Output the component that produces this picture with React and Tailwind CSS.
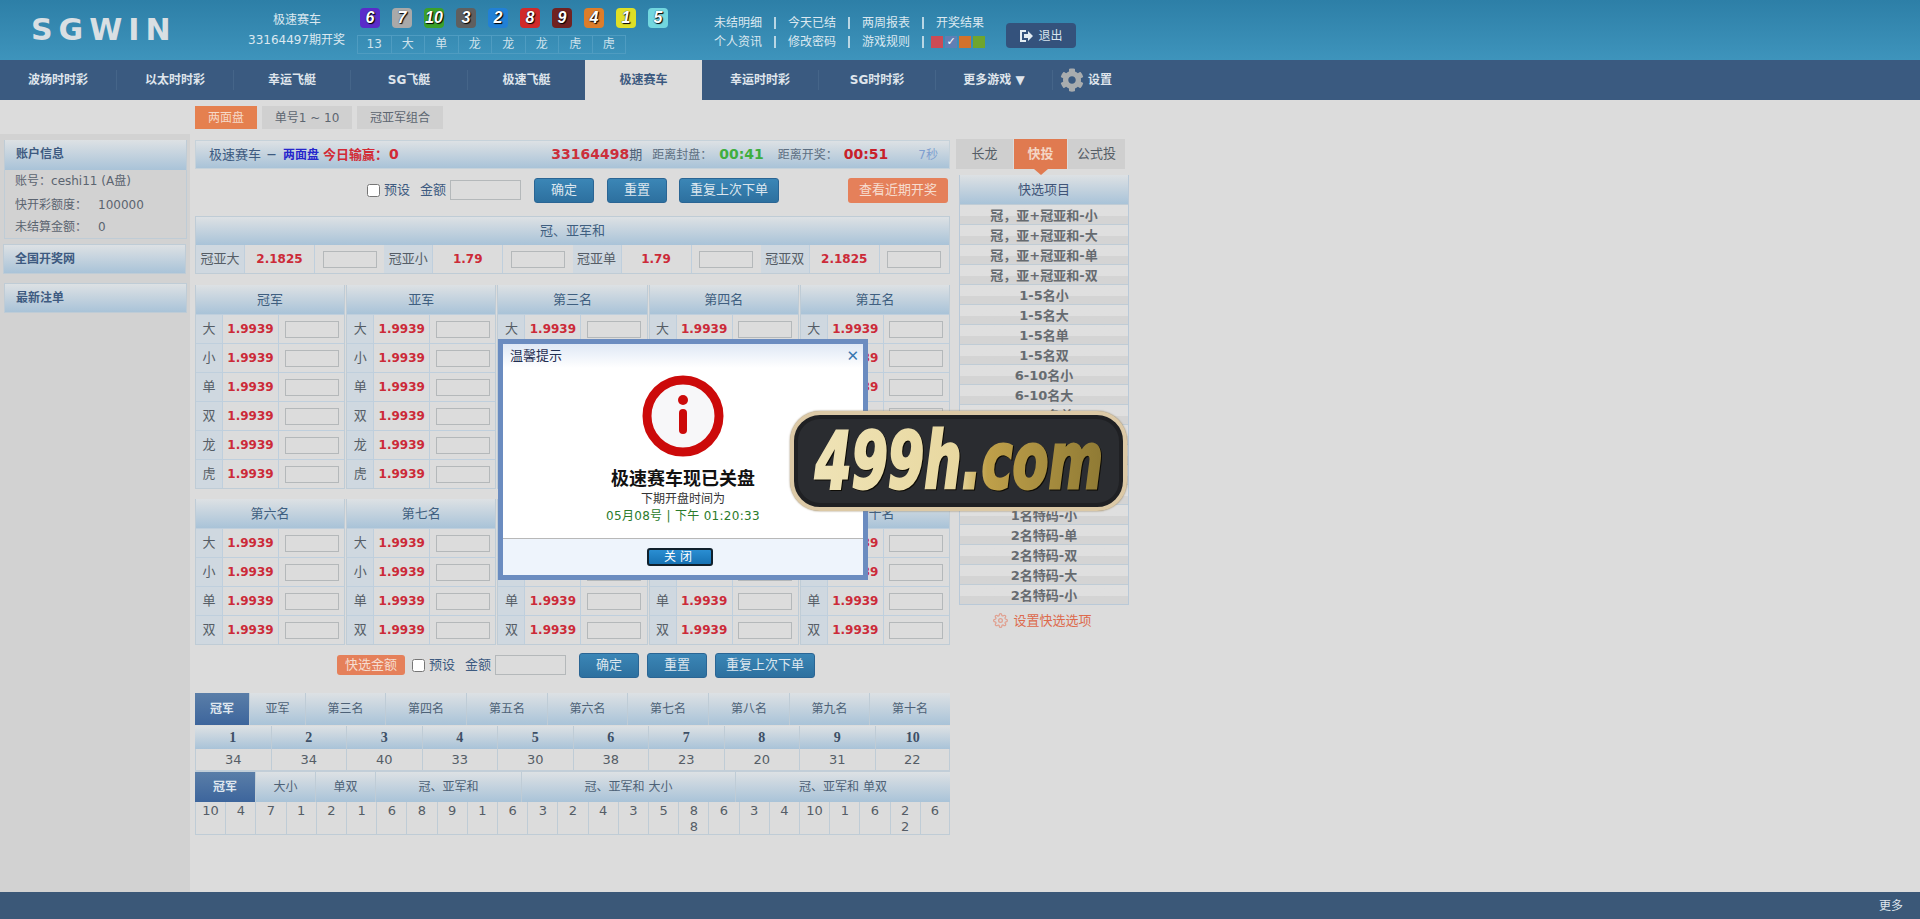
import React from "react";
import {FaCog} from "react-icons/fa";
import {FiSettings} from "react-icons/fi";

const balls = [
    {n: 6, c: "bg-[#5a2bc9]"},
    {n: 7, c: "bg-[#a9a9a9]"},
    {n: 10, c: "bg-[#3ba02a]"},
    {n: 3, c: "bg-[#5f5f5f]"},
    {n: 2, c: "bg-[#2180d6]"},
    {n: 8, c: "bg-[#d02a2a]"},
    {n: 9, c: "bg-[#702222]"},
    {n: 4, c: "bg-[#de7d2a]"},
    {n: 1, c: "bg-[#dfdf26]"},
    {n: 5, c: "bg-[#72d7df]"},
]
const nums = ["13", "大", "单", "龙", "龙", "龙", "虎", "虎"]
const navs = ["波场时时彩", "以太时时彩", "幸运飞艇", "SG飞艇", "极速飞艇", "极速赛车", "幸运时时彩", "SG时时彩", "更多游戏 ▼"]
const headGrad = "bg-linear-to-b from-[#dde1e4] to-[#a9c3d8]"

const Links = ({items, children}) => (
    <div className={'flex items-center h-[19px] gap-[12px] text-[12px] text-[#dbe8f0]'}>
        {items.map((t, i) => (
            <React.Fragment key={t}>
                {i > 0 && <span className={'w-[2px] h-[12px] bg-[#b9d6e4]'}/>}
                <span className={'w-[48px] whitespace-nowrap'}>{t}</span>
            </React.Fragment>
        ))}
        {children}
    </div>
)

const Header = () => (
    <div className={'h-[60px] flex bg-linear-to-b from-[#2d7fa7] to-[#3e94bc]'}>
        <div className={'w-[248px] pl-[31px] pt-[12px] text-[30px] leading-[36px] font-bold tracking-[6px] text-[#d9dfe3]'}>SGWIN</div>
        <div className={'w-[109px] pt-[10px] text-[12px] text-[#dbe8f0]'}>
            <div className={'h-[20px] leading-[20px] pl-[25px]'}>极速赛车</div>
            <div className={'h-[20px] leading-[20px] whitespace-nowrap'}>33164497期开奖</div>
        </div>
        <div className={'w-[357px] pt-[8px]'}>
            <div className={'flex gap-[12px] pl-[3px]'}>
                {balls.map((b) => (
                    <div key={b.n} className={'w-[20px] h-[20px] rounded-[4px] flex items-center justify-center text-[16px] font-bold italic text-white font-["Liberation_Sans",sans-serif] [text-shadow:0_0_1px_#000,1px_1px_1px_#000] ' + b.c}>{b.n}</div>
                ))}
            </div>
            <div className={'flex w-[269px] mt-[7px] border border-[#4f9cc1] h-[19px]'}>
                {nums.map((t, i) => (
                    <div key={i} className={'flex-1 border-r last:border-r-0 border-[#4f9cc1] text-[12px] leading-[17px] text-center text-[#cfe2ec]'}>{t}</div>
                ))}
            </div>
        </div>
        <div className={'w-[292px] pt-[13px]'}>
            <Links items={["未结明细", "今天已结", "两周报表", "开奖结果"]}/>
            <Links items={["个人资讯", "修改密码", "游戏规则"]}>
                <span className={'w-[2px] h-[12px] bg-[#b9d6e4]'}/>
                <div className={'flex gap-[2px] -ml-[5px]'}>
                    <span className={'w-[12px] h-[12px] bg-[#cc4b55]'}/>
                    <span className={'w-[12px] h-[12px] bg-[#5f7fb5] text-white text-[11px] leading-[12px] text-center'}>✓</span>
                    <span className={'w-[12px] h-[12px] bg-[#d4722a]'}/>
                    <span className={'w-[12px] h-[12px] bg-[#6fa52d]'}/>
                </div>
            </Links>
        </div>
        <div className={'mt-[23px] w-[70px] h-[25px] rounded-[4px] bg-[#34527c] flex items-center justify-center gap-[5px] text-[12px] text-[#d8e4ee]'}>
            <svg width="14" height="14" viewBox="0 0 14 14">
                <path d="M1 1h6v2H3v8h4v2H1z" fill="#e4ecf2"/>
                <path d="M5 5h4V2l5 5-5 5V9H5z" fill="#e4ecf2"/>
            </svg>
            退出
        </div>
    </div>
)

const Nav = () => (
    <div className={'h-[40px] flex bg-[#3a5a80] text-[12px] font-bold text-[#dfe5ec]'}>
        {navs.map((t, i) => (
            <React.Fragment key={t}>
                <div className={i === 5 ? 'w-[117px] flex items-center justify-center bg-[#dcdcdc] text-[#3d5a80]' : i === 4 ? 'w-[117px] flex items-center justify-center' : 'w-[116px] flex items-center justify-center'}>{t}</div>
                {i !== 4 && i !== 5 && <span className={'w-px h-[20px] self-center bg-[#456589]'}/>}
            </React.Fragment>
        ))}
        <div className={'flex items-center gap-[4px] ml-[7px]'}>
            <FaCog size={24} className={'text-[#a8acae]'}/>
            设置
        </div>
    </div>
)

const SideHead = ({children, className}) => (
    <div className={'h-[30px] pl-[11px] border border-[#bfccd6] text-[12px] leading-[28px] font-bold text-[#3d5a80] ' + headGrad + ' ' + className}>{children}</div>
)

const Sidebar = () => (
    <div className={'w-[190px] bg-[#d2d2d2] pt-[6px] pl-[4px]'}>
        <div className={'w-[183px] border border-[#bfccd6] border-t-0'}>
            <SideHead className={'border-0 pl-[10px] h-[29px]'}>账户信息</SideHead>
            <div className={'pl-[10px] text-[12px] text-[#5b6470]'}>
                <div className={'h-[24px] leading-[22px]'}>账号{"\uFF1A"}ceshi11 (A盘)</div>
                <div className={'h-[23px] leading-[23px] flex'}><span className={'w-[83px]'}>快开彩额度{"\uFF1A"}</span>100000</div>
                <div className={'h-[21px] leading-[21px] flex'}><span className={'w-[83px]'}>未结算金额{"\uFF1A"}</span>0</div>
            </div>
        </div>
        <SideHead className={'w-[183px] mt-[5px] -ml-px'}>全国开奖网</SideHead>
        <SideHead className={'w-[183px] mt-[9px]'}>最新注单</SideHead>
    </div>
)

const Box = () => <input type="text" className={'block border border-[#b4b8ba] bg-[#dcdcdc] h-[17px] w-[54px]'}/>

const Btn = ({children, className}) => (
    <button className={'h-[25px] rounded-[3px] border border-[#2a6594] bg-linear-to-b from-[#3b86b6] to-[#2d709f] text-[13px] text-[#dbe6ee] ' + className}>{children}</button>
)

const Group = ({title, rows}) => (
    <div className={'border border-t-0 border-[#bfccd6]'}>
        <div className={'h-[29px] text-center text-[13px] leading-[29px] text-[#3f5f80] ' + headGrad}>{title}</div>
        {rows.map((r) => (
            <div key={r} className={'h-[29px] flex border-t border-[#bfcfdd]'}>
                <div className={'w-[26px] flex items-center justify-center bg-[#cfd8e0] text-[13px] text-[#555d66]'}>{r}</div>
                <div className={'w-[57px] flex items-center justify-center border-x border-[#bfcfdd] text-[12px] font-bold text-[#cc2a38]'}>1.9939</div>
                <div className={'flex-1 flex items-center justify-center'}><Box/></div>
            </div>
        ))}
    </div>
)

const Main = () => (
    <div className={'w-[755px] ml-[5px] pt-[6px] shrink-0'}>
        <div className={'h-[29px] flex items-center pl-[13px] pr-[11px] border border-[#c6d2da] text-[13px] text-[#3d5a80] ' + headGrad}>
            <span>极速赛车</span>
            <span className={'ml-[6px] mr-[7px] text-[9px] font-bold'}>—</span>
            <span className={'text-[12px] font-bold text-[#2626cc]'}>两面盘</span>
            <span className={'ml-[4px] font-bold text-[#d22a35]'}>今日输赢{"\uFF1A"}</span>
            <span className={'ml-[1px] text-[14px] font-bold text-[#d22a35]'}>0</span>
            <span className={'ml-auto text-[14px] font-bold text-[#cc2f3a]'}>33164498</span>
            <span className={'text-[13px] text-[#4d6176]'}>期</span>
            <span className={'ml-[10px] text-[12px] text-[#5d6f82]'}>距离封盘{"\uFF1A"}</span>
            <span className={'ml-[7px] text-[14px] font-bold text-[#3fae3f]'}>00:41</span>
            <span className={'ml-[14px] text-[12px] text-[#5d6f82]'}>距离开奖{"\uFF1A"}</span>
            <span className={'ml-[6px] text-[14px] font-bold text-[#c8202a]'}>00:51</span>
            <span className={'ml-[30px] text-[12px] text-[#7f9fd0]'}>7秒</span>
        </div>

        <div className={'h-[26px] mt-[8px] mb-[13px] flex items-center text-[13px] text-[#3d5a80]'}>
            <input type="checkbox" className={'ml-[172px] w-[13px] h-[13px]'}/>
            <span className={'ml-[4px]'}>预设</span>
            <span className={'ml-[10px]'}>金额</span>
            <input type="text" className={'ml-[4px] w-[71px] h-[20px] border border-[#b4b8ba] bg-[#dcdcdc]'}/>
            <Btn className={'ml-[13px] w-[60px]'}>确定</Btn>
            <Btn className={'ml-[13px] w-[60px]'}>重置</Btn>
            <Btn className={'ml-[12px] w-[100px]'}>重复上次下单</Btn>
            <button className={'ml-[69px] w-[100px] h-[25px] rounded-[3px] bg-[#e5805a] text-[13px] text-[#f6ddd0]'}>查看近期开奖</button>
        </div>

        <div className={'border border-[#bfccd6]'}>
            <div className={'h-[28px] text-center text-[13px] leading-[28px] text-[#3f5f80] ' + headGrad}>冠、亚军和</div>
            <div className={'h-[28px] flex'}>
                {["冠亚大", "冠亚小", "冠亚单", "冠亚双"].map((t, i) => (
                    <div key={t} className={'flex-1 flex'}>
                        <div className={'w-[48px] flex items-center justify-center bg-[#cfd8e0] text-[13px] text-[#555d66] whitespace-nowrap'}>{t}</div>
                        <div className={'w-[71px] flex items-center justify-center border-x border-[#bfcfdd] text-[12px] font-bold text-[#cc2a38]'}>{i === 0 || i === 3 ? "2.1825" : "1.79"}</div>
                        <div className={'flex-1 flex items-center justify-center'}><Box/></div>
                    </div>
                ))}
            </div>
        </div>

        <div className={'grid grid-cols-5 gap-x-px mt-[11px]'}>
            {["冠军", "亚军", "第三名", "第四名", "第五名"].map((t) => (
                <Group key={t} title={t} rows={["大", "小", "单", "双", "龙", "虎"]}/>
            ))}
        </div>
        <div className={'grid grid-cols-5 gap-x-px mt-[10px]'}>
            {["第六名", "第七名", "第八名", "第九名", "第十名"].map((t) => (
                <Group key={t} title={t} rows={["大", "小", "单", "双"]}/>
            ))}
        </div>

        <div className={'h-[26px] mt-[7px] flex items-center text-[13px] text-[#3d5a80]'}>
            <button className={'ml-[142px] w-[68px] h-[20px] rounded-[3px] bg-[#e5805a] text-[13px] text-[#f6ddd0]'}>快选金额</button>
            <input type="checkbox" className={'ml-[7px] w-[13px] h-[13px]'}/>
            <span className={'ml-[4px]'}>预设</span>
            <span className={'ml-[10px]'}>金额</span>
            <input type="text" className={'ml-[4px] w-[71px] h-[20px] border border-[#b4b8ba] bg-[#dcdcdc]'}/>
            <Btn className={'ml-[13px] w-[60px]'}>确定</Btn>
            <Btn className={'ml-[8px] w-[60px]'}>重置</Btn>
            <Btn className={'ml-[8px] w-[100px]'}>重复上次下单</Btn>
        </div>

        <div className={'mt-[15px] h-[32px] grid grid-cols-[54px_56px_80px_81px_81px_80px_81px_81px_80px_81px] text-[12px] text-[#4d6176] ' + headGrad}>
            {["冠军", "亚军", "第三名", "第四名", "第五名", "第六名", "第七名", "第八名", "第九名", "第十名"].map((t, i) => (
                <div key={t} className={i === 0 ? 'flex items-center justify-center font-bold text-[#dfe6ee] bg-linear-to-b from-[#5a7ea8] to-[#3d659c]' : 'flex items-center justify-center border-l border-[#bfccd6]'}>{t}</div>
            ))}
        </div>
        <div className={'mt-px h-[23px] grid grid-cols-10 text-[14px] font-bold text-[#3d4f66] font-["Liberation_Serif",serif] ' + headGrad}>
            {[1, 2, 3, 4, 5, 6, 7, 8, 9, 10].map((t) => (
                <div key={t} className={'flex items-center justify-center border-l first:border-l-0 border-[#bfccd6]'}>{t}</div>
            ))}
        </div>
        <div className={'h-[23px] grid grid-cols-10 text-[13px] text-[#555d66] border-b-[2px] border-[#c2ced8]'}>
            {[34, 34, 40, 33, 30, 38, 23, 20, 31, 22].map((t, i) => (
                <div key={i} className={'flex items-center justify-center border-l last:border-r border-[#bfccd6]'}>{t}</div>
            ))}
        </div>
        <div className={'h-[30px] grid grid-cols-[60px_60px_60px_146px_214px_215px] text-[12px] text-[#4d6176] ' + headGrad}>
            {["冠军", "大小", "单双", "冠、亚军和", "冠、亚军和 大小", "冠、亚军和 单双"].map((t, i) => (
                <div key={t} className={i === 0 ? 'flex items-center justify-center font-bold text-[#dfe6ee] bg-linear-to-b from-[#5a7ea8] to-[#3d659c]' : 'flex items-center justify-center border-l border-[#bfccd6]'}>{t}</div>
            ))}
        </div>
        <div className={'h-[33px] grid grid-cols-[repeat(25,minmax(0,1fr))] border-b border-[#bfccd6] text-[13px] leading-[16px] text-[#555d66] text-center'}>
            {["10", "4", "7", "1", "2", "1", "6", "8", "9", "1", "6", "3", "2", "4", "3", "5", "8 8", "6", "3", "4", "10", "1", "6", "2 2", "6"].map((t, i) => (
                <div key={i} className={'border-l last:border-r border-[#bfccd6] pt-[1px] px-[6px]'}>{t}</div>
            ))}
        </div>
    </div>
)

const quick = [
    "冠\uFF0C亚+冠亚和-小", "冠\uFF0C亚+冠亚和-大", "冠\uFF0C亚+冠亚和-单", "冠\uFF0C亚+冠亚和-双",
    "1-5名小", "1-5名大", "1-5名单", "1-5名双",
    "6-10名小", "6-10名大", "6-10名单", "6-10名双",
    "1名特码-单", "1名特码-双", "1名特码-大", "1名特码-小",
    "2名特码-单", "2名特码-双", "2名特码-大", "2名特码-小",
]

const Right = () => (
    <div className={'ml-[6px] pt-[5px] w-[173px] shrink-0'}>
        <div className={'flex h-[30px] gap-px text-[13px] text-[#555d66]'}>
            <div className={'w-[57px] flex items-center justify-center bg-[#cfcfcf]'}>长龙</div>
            <div className={'relative w-[53px] flex items-center justify-center bg-[#e07a50] font-bold text-[#f3d5c4]'}>
                快投
                <span className={'absolute top-full left-[20px] border-x-[7px] border-t-[6px] border-x-transparent border-t-[#e07a50]'}/>
            </div>
            <div className={'w-[57px] flex items-center justify-center bg-[#cfcfcf]'}>公式投</div>
        </div>
        <div className={'mt-[6px] ml-[3px] w-[170px] border border-[#b9c9d8] border-t-0'}>
            <div className={'h-[29px] text-center text-[13px] leading-[29px] text-[#3f5478] ' + headGrad}>快选项目</div>
            {quick.map((q) => (
                <div key={q} className={'h-[20px] border-t border-[#bfccd6] bg-linear-to-b from-[#dfdfdf] from-60% to-[#d4d4d4] to-60% text-center text-[13px] leading-[21px] font-bold text-[#666b70] whitespace-nowrap'}>{q}</div>
            ))}
        </div>
        <div className={'mt-[6px] flex items-center justify-center gap-[5px] text-[13px] text-[#dd6a4c]'}>
            <FiSettings size={15} className={'text-[#e0a090]'}/>
            设置快选选项
        </div>
    </div>
)

const Modal = () => (
    <div className={'absolute left-[498px] top-[339px] w-[370px] h-[241px] border-[5px] border-[#6b8cc0] bg-white flex flex-col'}>
        <div className={'h-[24px] flex items-center justify-between pl-[7px] pr-[4px] bg-linear-to-b from-[#dfe8f5] to-white text-[13px] text-[#1f2d50]'}>
            温馨提示
            <span className={'text-[15px] font-bold text-[#3a78b0]'}>✕</span>
        </div>
        <div className={'flex-1 flex flex-col items-center'}>
            <svg width="82" height="82" viewBox="0 0 82 82" className={'mt-[7px]'}>
                <circle cx="41" cy="41" r="36" fill="#f7f7f9" stroke="#cc0a0a" strokeWidth="9"/>
                <circle cx="41" cy="25" r="5" fill="#cc0a0a"/>
                <rect x="37" y="34" width="8" height="25" rx="4" fill="#cc0a0a"/>
            </svg>
            <div className={'mt-[11px] text-[18px] leading-[22px] font-bold text-[#111]'}>极速赛车现已关盘</div>
            <div className={'mt-[1px] text-[12px] leading-[16px] text-[#333]'}>下期开盘时间为</div>
            <div className={'mt-[1px] text-[12px] leading-[16px] tracking-[0.3px] text-[#2a7a2a]'}>05月08号 | 下午 01:20:33</div>
        </div>
        <div className={'h-[37px] border-t border-[#b8b8b8] bg-[#eef4fc] flex justify-center pt-[9px] pr-[6px]'}>
            <button className={'w-[66px] h-[18px] rounded-[3px] border-[2px] border-[#10202c] bg-linear-to-b from-[#2a8ed2] to-[#1672b4] text-[12px] leading-[12px] tracking-[4px] text-white'}>关闭</button>
        </div>
    </div>
)

const Stamp = () => (
    <div className={'absolute left-[790px] top-[411px] w-[337px] h-[100px] rounded-[30px] border-[4px] border-[#dcc9a6] bg-[#2a2c30] shadow-[0_0_2px_#8d7a58,inset_0_0_0_4px_#1f2023]'}>
        <svg width="329" height="92" viewBox="0 0 329 92">
            <defs>
                <linearGradient id="gold" x1="0" x2="1" y1="0" y2="0">
                    <stop offset="0" stopColor="#efe3b6"/>
                    <stop offset="0.5" stopColor="#e8d8a0"/>
                    <stop offset="0.6" stopColor="#bfa04a"/>
                    <stop offset="1" stopColor="#8f7a34"/>
                </linearGradient>
            </defs>
            <text x="21" y="73" textLength="288" lengthAdjust="spacingAndGlyphs" fontFamily="DejaVu Sans" fontWeight="bold" fontStyle="italic" fontSize="78" fill="url(#gold)" stroke="url(#gold)" strokeWidth="3" className={'drop-shadow-[1px_1px_0_#0e0c06]'}>499h.com</text>
        </svg>
    </div>
)

export default function App() {
    return (
        <div className={'relative h-[919px] flex flex-col bg-[#dcdcdc] font-["DejaVu_Sans","Noto_Sans_CJK_SC",sans-serif] overflow-hidden'}>
            <Header/>
            <Nav/>
            <div className={'h-[34px] pl-[195px] pt-[6px] flex gap-[5px] text-[12px] text-[#5d6670]'}>
                <div className={'w-[62px] h-[23px] flex items-center justify-center bg-[#e5804f] text-[#f6d9c8]'}>两面盘</div>
                <div className={'w-[90px] h-[23px] flex items-center justify-center bg-[#d0d0d0]'}>单号1 ~ 10</div>
                <div className={'w-[86px] h-[23px] flex items-center justify-center bg-[#d0d0d0]'}>冠亚军组合</div>
            </div>
            <div className={'flex-1 flex'}>
                <Sidebar/>
                <Main/>
                <Right/>
            </div>
            <div className={'h-[27px] bg-[#3b5878] flex items-center justify-end pr-[17px] text-[12px] text-[#dfe6ee]'}>更多</div>
            <Modal/>
            <Stamp/>
        </div>
    )
}
